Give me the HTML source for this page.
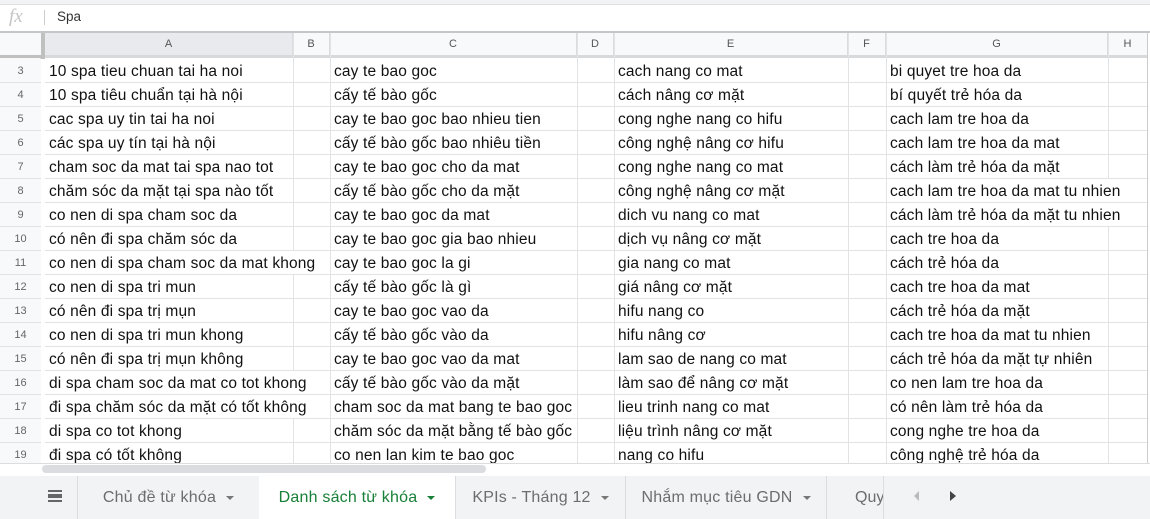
<!DOCTYPE html>
<html><head><meta charset="utf-8"><style>
*{margin:0;padding:0;box-sizing:border-box}
body{width:1150px;height:519px;overflow:hidden;background:#fff;font-family:"Liberation Sans",Arial,sans-serif;position:relative}
.a{position:absolute}
.cell{position:absolute;font-size:15.5px;letter-spacing:0.15px;color:#111;white-space:nowrap;line-height:25px;padding:0 3px;background:#fff}
.rh{position:absolute;left:0;width:41px;text-align:center;font-size:11px;color:#666;line-height:24px;background:#f8f9fa}
.ch{position:absolute;top:33px;height:22px;line-height:22px;text-align:center;font-size:11px;color:#555;background:#f8f9fa;border-right:1px solid #dadce0}
.hl{position:absolute;left:45px;width:1103px;height:1px;background:#e2e3e5;z-index:2}
.vl{position:absolute;top:33px;height:431px;width:1px;background:#e2e3e5}
.tab{position:absolute;top:476px;height:43px;line-height:43px;font-size:16px;letter-spacing:0.2px;color:#6d6d6d;text-align:center}
.tab .ar{display:inline-block;width:0;height:0;border-left:4px solid transparent;border-right:4px solid transparent;border-top:4px solid #777;margin-left:10px;vertical-align:middle}
</style></head><body>
<div class="a" style="left:0;top:0;width:1150px;height:5px;background:#f1f3f4"></div>
<div class="a" style="left:0;top:4px;width:1150px;height:1px;background:#e0e0e0"></div>
<div class="a" style="left:9px;top:6px;font-family:'Liberation Serif',serif;font-style:italic;font-size:19px;color:#c5c5c5">fx</div>
<div class="a" style="left:44px;top:10px;width:1px;height:15px;background:#ccc"></div>
<div class="a" style="left:57px;top:9px;font-size:13.5px;color:#333">Spa</div>
<div class="a" style="left:0;top:31px;width:1150px;height:2px;background:#c4c7c9"></div>
<div class="a" style="left:0;top:33px;width:41px;height:22px;background:#f8f9fa"></div>
<div class="a" style="left:41px;top:33px;width:4px;height:26px;background:#c0c0c0"></div>
<div class="a" style="left:0;top:55px;width:45px;height:4px;background:#c0c0c0"></div>
<div class="ch" style="left:45px;width:248px;background:#e8eaed">A</div>
<div class="ch" style="left:293px;width:37px">B</div>
<div class="ch" style="left:330px;width:247px">C</div>
<div class="ch" style="left:577px;width:37px">D</div>
<div class="ch" style="left:614px;width:234px">E</div>
<div class="ch" style="left:848px;width:38px">F</div>
<div class="ch" style="left:886px;width:222px">G</div>
<div class="ch" style="left:1108px;width:40px">H</div>
<div class="a" style="left:45px;top:55px;width:1103px;height:3px;background:#d8d9db"></div>
<div class="a" style="left:0;top:58px;width:41px;height:406px;background:#f8f9fa;border-right:1px solid #ddd"></div>
<div class="vl" style="left:293px"></div><div class="vl" style="left:330px"></div><div class="vl" style="left:577px"></div><div class="vl" style="left:614px"></div><div class="vl" style="left:848px"></div><div class="vl" style="left:886px"></div><div class="vl" style="left:1108px"></div>
<div id="rows"></div>
<div class="vl" style="left:1147px;background:#ccc;z-index:3"></div>
<script>
var d=[
["10 spa tieu chuan tai ha noi","cay te bao goc","cach nang co mat","bi quyet tre hoa da"],
["10 spa tiêu chuẩn tại hà nội","cấy tế bào gốc","cách nâng cơ mặt","bí quyết trẻ hóa da"],
["cac spa uy tin tai ha noi","cay te bao goc bao nhieu tien","cong nghe nang co hifu","cach lam tre hoa da"],
["các spa uy tín tại hà nội","cấy tế bào gốc bao nhiêu tiền","công nghệ nâng cơ hifu","cach lam tre hoa da mat"],
["cham soc da mat tai spa nao tot","cay te bao goc cho da mat","cong nghe nang co mat","cách làm trẻ hóa da mặt"],
["chăm sóc da mặt tại spa nào tốt","cấy tế bào gốc cho da mặt","công nghệ nâng cơ mặt","cach lam tre hoa da mat tu nhien"],
["co nen di spa cham soc da","cay te bao goc da mat","dich vu nang co mat","cách làm trẻ hóa da mặt tu nhien"],
["có nên đi spa chăm sóc da","cay te bao goc gia bao nhieu","dịch vụ nâng cơ mặt","cach tre hoa da"],
["co nen di spa cham soc da mat khong","cay te bao goc la gi","gia nang co mat","cách trẻ hóa da"],
["co nen di spa tri mun","cấy tế bào gốc là gì","giá nâng cơ mặt","cach tre hoa da mat"],
["có nên đi spa trị mụn","cay te bao goc vao da","hifu nang co","cách trẻ hóa da mặt"],
["co nen di spa tri mun khong","cấy tế bào gốc vào da","hifu nâng cơ","cach tre hoa da mat tu nhien"],
["có nên đi spa trị mụn không","cay te bao goc vao da mat","lam sao de nang co mat","cách trẻ hóa da mặt tự nhiên"],
["di spa cham soc da mat co tot khong","cấy tế bào gốc vào da mặt","làm sao để nâng cơ mặt","co nen lam tre hoa da"],
["đi spa chăm sóc da mặt có tốt không","cham soc da mat bang te bao goc","lieu trinh nang co mat","có nên làm trẻ hóa da"],
["di spa co tot khong","chăm sóc da mặt bằng tế bào gốc","liệu trình nâng cơ mặt","cong nghe tre hoa da"],
["đi spa có tốt không","co nen lan kim te bao goc","nang co hifu","công nghệ trẻ hóa da"]];
var xs=[45,330,614,886],ws=[248,247,234,222],h="";
for(var i=0;i<d.length;i++){var t=59+i*24;
h+='<div class="rh" style="top:'+t+'px;height:24px">'+(i+3)+'</div>';
h+='<div class="hl" style="top:'+(t+23)+'px"></div>';
h+='<div class="a" style="left:0;width:41px;height:1px;background:#e2e3e5;top:'+(t+23)+'px"></div>';
for(var j=0;j<4;j++){h+='<div class="cell" style="left:'+(xs[j]+1)+'px;top:'+t+'px;min-width:'+(ws[j]-1)+'px;height:23px">'+d[i][j]+'</div>';}}
document.getElementById('rows').innerHTML=h;
</script>
<div class="a" style="left:0;top:463px;width:1150px;height:13px;background:#fff;border-top:1px solid #ddd;z-index:4"></div>
<div class="a" style="left:42px;top:465px;width:444px;height:8px;border-radius:4px;background:#dadce0;z-index:5"></div>
<div class="a" style="left:0;top:476px;width:1150px;height:43px;background:#f1f3f4"></div>
<div class="a" style="left:48px;top:490px;width:14px;height:12px;border-top:2px solid #666;border-bottom:2px solid #666"></div>
<div class="a" style="left:48px;top:494px;width:14px;height:4px;border-top:2px solid #666;border-bottom:2px solid #666"></div>
<div class="a" style="left:77px;top:476px;width:1px;height:43px;background:#dadce0"></div>
<div class="tab" style="left:78px;width:181px">Chủ đề từ khóa<span class="ar"></span></div>
<div class="tab" style="left:259px;width:196px;background:#fff;color:#188038">Danh sách từ khóa<span class="ar" style="border-top-color:#188038"></span></div>
<div class="tab" style="left:455px;width:170px;border-left:1px solid #dadce0">KPIs - Tháng 12<span class="ar"></span></div>
<div class="tab" style="left:625px;width:201px;border-left:1px solid #dadce0">Nhắm mục tiêu GDN<span class="ar"></span></div>
<div class="tab" style="left:826px;width:57px;border-left:1px solid #dadce0;text-align:left;padding-left:28px;overflow:hidden;white-space:nowrap;letter-spacing:0">Quy t</div>
<div class="a" style="left:883px;top:476px;width:1px;height:43px;background:#ddd"></div>
<div class="a" style="left:914px;top:491px;width:0;height:0;border-top:5px solid transparent;border-bottom:5px solid transparent;border-right:5px solid #bbb"></div>
<div class="a" style="left:950px;top:491px;width:0;height:0;border-top:5px solid transparent;border-bottom:5px solid transparent;border-left:6px solid #444"></div>
</body></html>
